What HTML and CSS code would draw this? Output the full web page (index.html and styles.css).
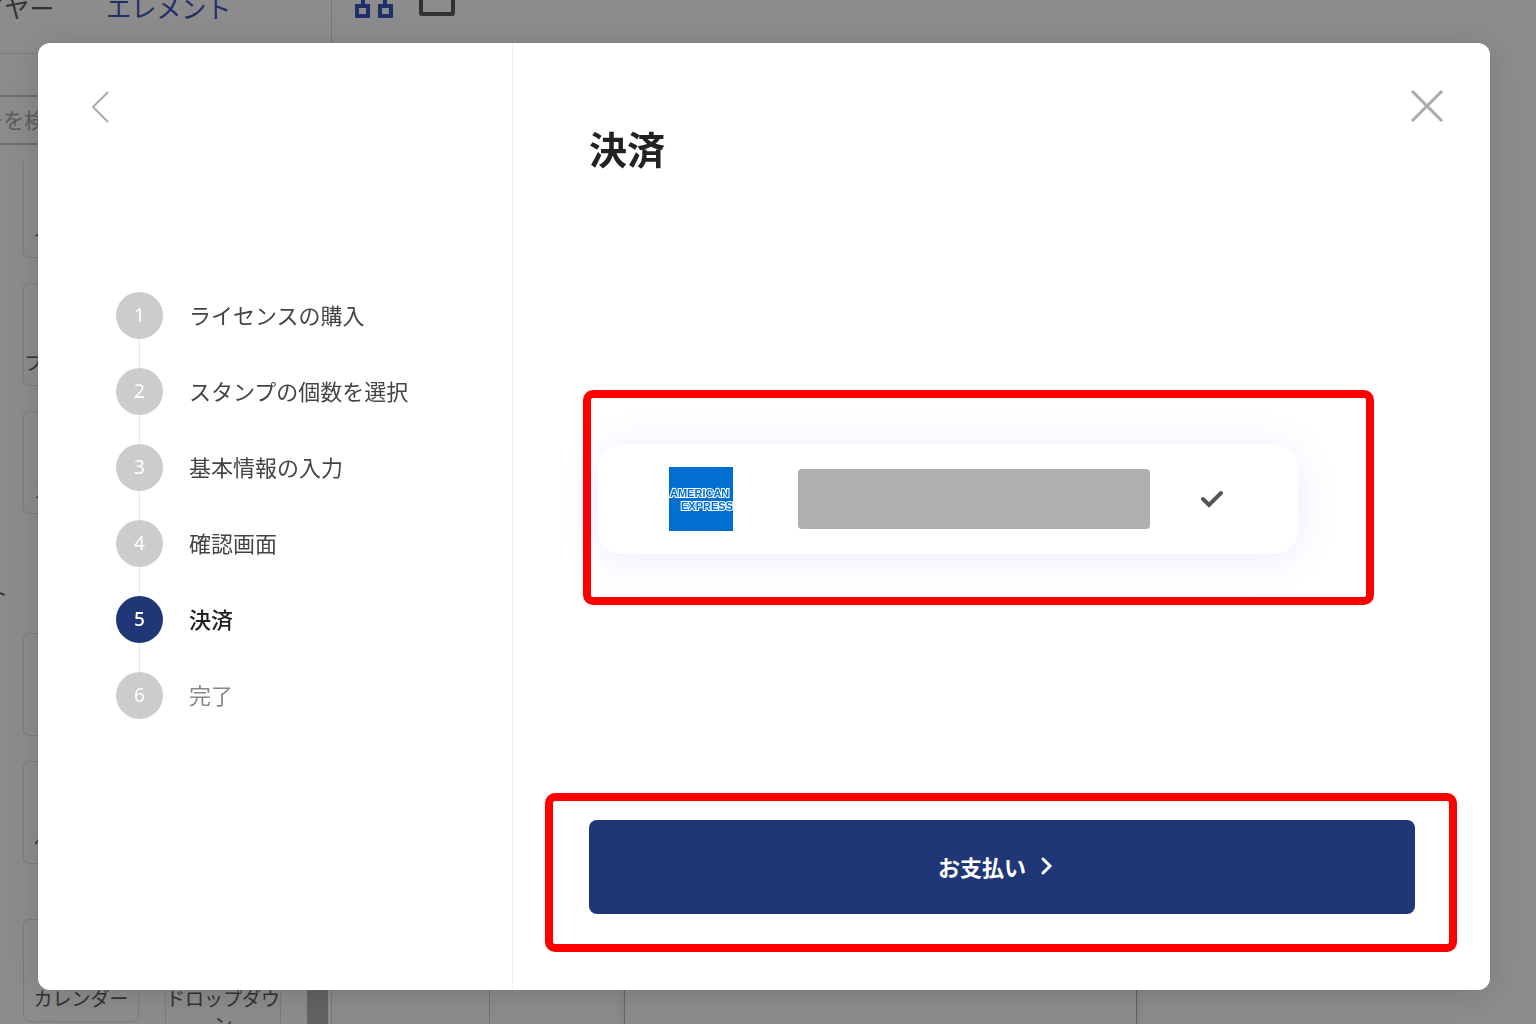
FILE: index.html
```html
<!DOCTYPE html>
<html lang="ja">

<head>
    <meta charset="UTF-8">
    <meta name="viewport" content="width=device-width, initial-scale=1.0">
    <title>決済</title>
    <link rel="stylesheet" href="styles.css">
</head>

<body>
    <div class="editor">
        <aside class="sidebar">
            <nav class="tabs">
                <a href="#">レイヤー</a>
                <a href="#" class="active">エレメント</a>
            </nav>
            <input class="search" type="text" placeholder="レイヤーを検索" aria-label="レイヤーを検索">
            <div class="element-list">
                <div class="element-group">
                    <button class="element">インプット</button>
                </div>
                <div class="element-group">
                    <button class="element">プロフィール</button>
                </div>
                <div class="element-group">
                    <button class="element">スライダー</button>
                </div>
                <h2>リスト</h2>
                <div class="element-group">
                    <button class="element" aria-label="地図"></button>
                </div>
                <div class="element-group">
                    <button class="element">ページ番号</button>
                </div>
                <div class="element-group last">
                    <button class="element">カレンダー</button>
                    <button class="element tall">ドロップダウン</button>
                </div>
            </div>
        </aside>
        <div class="scrollbar"></div>
        <main class="stage">
            <div class="toolbar">
                <svg width="38" height="38" viewBox="0 0 38 38" fill="none" stroke="#3c56c0" stroke-width="4">
                    <path d="M13 0h12v8H13zM19 8v6M8 26V14h22v12M2 26h11v10H2zM25 26h11v10H25z" />
                </svg>
                <svg width="38" height="38" viewBox="0 0 38 38" fill="none" stroke="#5c5c5c" stroke-width="4">
                    <rect x="2" y="5" width="32" height="29" rx="1" />
                </svg>
            </div>
            <div class="canvas">
                <div class="page-list"></div>
                <div class="artboard"></div>
            </div>
        </main>
    </div>

    <div class="overlay">
        <div class="modal" role="dialog" aria-modal="true" aria-labelledby="modal-title">
            <div class="modal-side">
                <button class="icon-btn" aria-label="戻る">
                    <svg width="20" height="32" viewBox="0 0 20 32" fill="none" stroke="#aaaaaa" stroke-width="2">
                        <path d="M18 1L3 16l15 15" />
                    </svg>
                </button>
                <ol class="steps">
                    <li><span class="step-no">1</span><span class="step-label">ライセンスの購入</span></li>
                    <li><span class="step-no">2</span><span class="step-label">スタンプの個数を選択</span></li>
                    <li><span class="step-no">3</span><span class="step-label">基本情報の入力</span></li>
                    <li><span class="step-no">4</span><span class="step-label">確認画面</span></li>
                    <li class="current" aria-current="step"><span class="step-no">5</span><span class="step-label">決済</span></li>
                    <li class="next"><span class="step-no">6</span><span class="step-label">完了</span></li>
                </ol>
            </div>

            <div class="modal-main">
                <div class="modal-header">
                    <h1 id="modal-title">決済</h1>
                    <button class="icon-btn" aria-label="閉じる">
                        <svg width="34" height="32" viewBox="0 0 34 32" fill="none" stroke="#aaaaaa" stroke-width="3">
                            <path d="M2 1l30 30M32 1L2 31" />
                        </svg>
                    </button>
                </div>

                <div class="modal-body">
                    <div class="highlight card-area">
                        <button class="card" aria-pressed="true" aria-label="登録済みのカード">
                            <svg class="brand" width="64" height="64" viewBox="0 0 64 64">
                                <rect width="64" height="64" fill="#016fd0" />
                                <text x="1" y="30">AMERICAN</text>
                                <text x="12" y="43">EXPRESS</text>
                            </svg>
                            <span class="card-number"></span>
                            <svg width="24" height="20" viewBox="0 0 24 20" fill="none" stroke="#555555" stroke-width="4" stroke-linecap="round" stroke-linejoin="miter">
                                <path d="M3 10l6 6L21 4" />
                            </svg>
                        </button>
                    </div>
                </div>

                <div class="highlight pay-area">
                    <button class="pay-btn">
                        お支払い
                        <svg width="30" height="22" viewBox="0 0 30 22" fill="none" stroke="#ffffff" stroke-width="3" stroke-linecap="round">
                            <path d="M7 4l7 7-7 7" />
                        </svg>
                    </button>
                </div>
            </div>
        </div>
    </div>
</body>

</html>
```

FILE: styles.css
```css
* {
    box-sizing: border-box;
}

body {
    margin: 0;
    height: 100vh;
    overflow: hidden;
    font-family: "Noto Sans CJK JP", sans-serif;
    color: #444;
    background-color: #fff;
}

button {
    font-family: inherit;
    cursor: pointer;
}

/* editor behind the dialog, scrolled a little to the right and down */
.editor {
    display: flex;
    height: calc(100vh + 40px);
    margin: -40px 0 0 -100px;
}

.sidebar {
    display: flex;
    flex-direction: column;
    flex: 0 0 407px;
}

.tabs {
    display: flex;
    flex: 0 0 94px;
    align-items: center;
    gap: 52px;
    padding-left: 55px;
    border-bottom: 1px solid #e0e0e0;
    font-size: 25px;
}

.tabs a {
    color: #5c5c5c;
    text-decoration: none;
    white-space: nowrap;
}

.tabs a.active {
    color: #3c56c0;
}

.search {
    flex: 0 0 50px;
    margin: 41px 20px 16px 8px;
    padding: 0 10px 2px;
    border: 2px solid #c8c8c8;
    background: none;
    font-family: inherit;
    font-size: 21px;
}

.search::placeholder {
    color: #a8a8a8;
}

.element-list {
    display: flex;
    flex-direction: column;
    flex: 1;
    justify-content: flex-end;
    min-height: 0;
    overflow: hidden;
}

.element-list h2 {
    margin: 62px 0 57px 45px;
    height: 0;
    font-size: 21px;
    font-weight: 400;
    line-height: 32px;
    color: #5c5c5c;
}

.element-group {
    display: grid;
    grid-template-columns: 116px 116px;
    gap: 26px;
    padding-left: 123px;
}

.element-group + .element-group {
    margin-top: 25px;
}

.element-group + .element-group.last {
    margin: 55px 0 -24px;
    align-items: start;
}

.element {
    display: flex;
    align-items: flex-end;
    justify-content: center;
    height: 103px;
    padding: 0 0 10px;
    border: 1px solid #e4e4e4;
    border-radius: 6px;
    background: none;
    color: #5c5c5c;
    font-size: 19px;
    line-height: 26px;
}

.element.tall {
    height: 129px;
}

.scrollbar {
    flex: 0 0 21px;
    margin-top: 200px;
    background-color: #b4b4b4;
}

.stage {
    display: flex;
    flex-direction: column;
    flex: 1;
    margin-left: 3px;
    border-left: 1px solid #d8d8d8;
}

.toolbar {
    display: flex;
    gap: 26px;
    padding: 20px 23px 50px;
}

.canvas {
    display: flex;
    flex: 1;
}

.page-list {
    flex: 0 0 158px;
    border-right: 1px solid #d0d0d0;
}

.artboard {
    flex: 0 0 513px;
    margin-left: 134px;
    border: solid #b4b4b4;
    border-width: 0 1px;
    box-shadow: 0 0 10px rgba(0, 0, 0, 0.1);
}

/* dialog */
.overlay {
    position: fixed;
    inset: 0;
    display: flex;
    padding: 43px 46px 34px 38px;
    background-color: rgba(0, 0, 0, 0.45);
}

.modal {
    display: flex;
    flex: 1;
    border-radius: 12px;
    background-color: #fff;
    box-shadow: 0 4px 40px rgba(0, 0, 0, 0.15);
}

.modal-side {
    flex: 0 0 475px;
    padding: 48px 24px 0 52px;
    border-right: 1px solid #f0f0f0;
}

.icon-btn {
    display: block;
    padding: 0;
    border: none;
    background: none;
}

.icon-btn svg {
    display: block;
}

.steps {
    margin: 169px 0 0;
    padding: 0 0 0 26px;
    list-style: none;
    font-size: 22px;
}

.steps li {
    display: flex;
    flex-wrap: wrap;
    align-items: center;
    column-gap: 26px;
}

.steps li:not(:last-child)::after {
    content: "";
    flex: 0 0 100%;
    height: 29px;
    margin-left: 23px;
    border-left: 1px solid #dfecee;
}

.step-no {
    width: 47px;
    border-radius: 50%;
    background-color: #ccc;
    color: #fff;
    font-family: "Noto Sans", sans-serif;
    font-size: 19px;
    line-height: 47px;
    text-align: center;
}

.step-label {
    padding-bottom: 3px;
    line-height: 32px;
}

.steps .current {
    color: #222;
    font-weight: 500;
}

.current .step-no {
    background-color: #203777;
}

.steps .next {
    color: #888;
}

.modal-main {
    display: flex;
    flex-direction: column;
    flex: 1;
    padding: 47px 33px 38px 32px;
}

.modal-header {
    display: flex;
    align-items: flex-start;
    justify-content: space-between;
    padding: 0 13px 0 44px;
}

.modal-header h1 {
    margin: 33px 0 2px;
    color: #222;
    font-size: 38px;
    line-height: 50px;
}

.modal-body {
    display: flex;
    flex-direction: column;
    flex: 1;
    justify-content: center;
    padding: 27px 83px 0 38px;
}

.highlight {
    border: 8px solid #f00;
    border-radius: 10px;
}

.card-area {
    padding: 46px 68px 43px 7px;
}

.card {
    display: flex;
    align-items: center;
    width: 100%;
    height: 110px;
    padding: 0 74px 0 71px;
    border: none;
    border-radius: 24px;
    background-color: #fff;
    box-shadow: 0 4px 40px rgba(80, 50, 255, 0.1);
}

.brand text {
    fill: #016fd0;
    stroke: #fff;
    stroke-width: 2px;
    paint-order: stroke;
    font-family: "Liberation Sans", sans-serif;
    font-size: 11px;
    font-weight: 700;
}

.card-number {
    flex: 1;
    height: 60px;
    margin: 0 50px 0 65px;
    border-radius: 4px;
    background-color: #afafaf;
}

.pay-area {
    padding: 19px 34px 30px 36px;
}

.pay-btn {
    display: flex;
    align-items: center;
    justify-content: center;
    gap: 10px;
    width: 100%;
    height: 94px;
    padding: 0 0 3px;
    border: none;
    border-radius: 8px;
    background-color: #203777;
    color: #fff;
    font-size: 22px;
    font-weight: 700;
}

.pay-btn:hover {
    background-color: #2b4796;
}
```
